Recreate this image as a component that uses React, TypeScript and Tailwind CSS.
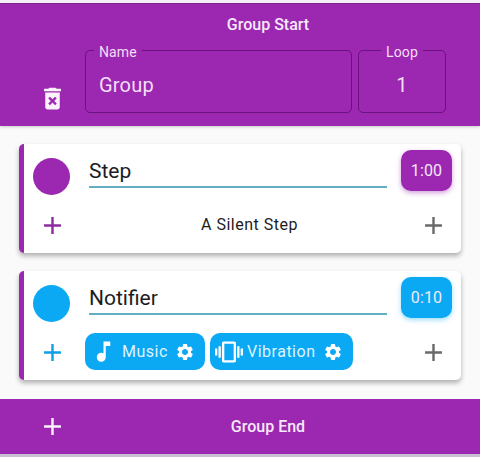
import { MdAdd, MdDeleteForever, MdMusicNote, MdSettings, MdVibration } from "react-icons/md";

const font = { fontFamily: "Roboto, sans-serif" };

function Field({ label, value, center, className }: { label: string; value: string; center?: boolean; className: string }) {
  return (
    <fieldset className={`h-[71px] rounded-[5px] border border-[#6a1280] ${center ? "text-center" : "px-[8px]"} ${className}`}>
      <legend className={`px-[5px] text-[14px] leading-[16px] tracking-[0.1px] text-[#f3dff7] ${center ? "mx-auto" : ""}`}>
        <span className="relative top-[2px]">{label}</span>
      </legend>
      <div className={`mt-[13px] text-[20px] leading-[28px] tracking-[0.2px] text-[#f3dff7] ${center ? "" : "pl-[5px]"}`}>{value}</div>
    </fieldset>
  );
}

function Card({
  color,
  title,
  time,
  children,
}: {
  color: string;
  title: string;
  time: string;
  children: React.ReactNode;
}) {
  const circle = color === "purple" ? "bg-[#9c27b0]" : "bg-[#0ba8f3]";
  const btn = color === "purple" ? "bg-[#9c27b0] shadow-[0_2px_5px_rgba(156,39,176,0.45)]" : "bg-[#0ba8f3] shadow-[0_2px_5px_rgba(11,168,243,0.4)]";
  const plus = color === "purple" ? "text-[#8e2ba1]" : "text-[#0f9fe6]";
  return (
    <div className="mx-[19px] flex h-[109px] w-[442px] flex-col rounded-[5px] border-l-[5px] border-[#9c27b0] bg-white shadow-[0_3px_5px_rgba(0,0,0,0.3)]">
      <div className="flex h-[61px] items-start pl-[9px] pr-[9px]">
        <div className={`mt-[14px] h-[37px] w-[37px] rounded-full ${circle}`} />
        <div className="ml-[19px] mt-[11px] h-[33px] w-[298px] border-b-2 border-[#62afc2] text-[21px] leading-[33px] text-[#1c1c1f]">{title}</div>
        <div className={`ml-[14px] mt-[6px] flex h-[41px] w-[51px] items-center justify-center rounded-[10px] text-[16px] tracking-[0.1px] text-[#f5e8f8] ${btn}`}>{time}</div>
      </div>
      <div className="flex h-[40px] items-center">
        <div className={`flex w-[56px] justify-center pl-[1px] ${plus}`}><MdAdd size={29} /></div>
        <div className="flex min-w-0 flex-1 items-center">{children}</div>
        <div className="flex w-[56px] justify-center text-[#6a6a6a]"><MdAdd size={29} /></div>
      </div>
    </div>
  );
}

function Chip({ icon, label, className }: { icon: React.ReactNode; label: string; className: string }) {
  return (
    <div className={`flex h-[37px] items-center rounded-[10px] bg-[#0ba8f3] text-[16px] tracking-[0.5px] text-[#dff4ff] ${className}`}>
      {icon}
      <span>{label}</span>
      <MdSettings size={20} className="ml-auto text-white" />
    </div>
  );
}

export default function App() {
  return (
    <div style={font} className="h-[457px] w-[480px] overflow-hidden bg-[#fafafa]">
      <div className="h-[4px] border-b border-[#7f2a90] bg-[#f6eef8]" />
      <header className="h-[122px] bg-[#9c27b0] shadow-[0_1px_3px_rgba(0,0,0,0.2)]">
        <div className="pl-[56px] pt-[11px] text-center text-[16px] font-medium leading-[20px] text-[#f6e9f9]">Group Start</div>
        <div className="mt-[7px] flex items-start">
          <div className="mt-[42px] flex w-[85px] justify-center pl-[19px] text-[#fbf3fc]">
            <MdDeleteForever size={29} />
          </div>
          <Field label="Name" value="Group" className="w-[267px]" />
          <Field label="Loop" value="1" center className="ml-[6px] w-[88px]" />
        </div>
      </header>

      <div className="pt-[18px]">
        <Card color="purple" title="Step" time="1:00">
          <div className="w-full pl-[14px] text-center text-[16px] tracking-[0.5px] text-[#1c1c1f]">A Silent Step</div>
        </Card>
      </div>

      <div className="pt-[18px]">
        <Card color="blue" title="Notifier" time="0:10">
          <div className="mb-[1px] flex gap-[5px] pl-[5px]">
            <Chip
              icon={<MdMusicNote size={27} className="mr-[5px] text-white" />}
              label="Music"
              className="w-[120px] pl-[5px] pr-[10px]"
            />
            <Chip
              icon={<MdVibration size={28} className="mr-[4px] text-white" />}
              label="Vibration"
              className="w-[143px] pl-[5px] pr-[10px]"
            />
          </div>
        </Card>
      </div>

      <footer className="mt-[19px] flex h-[55px] items-center bg-[#9c27b0] shadow-[0_3px_0_#c9bfd0]">
        <div className="flex w-[104px] justify-center text-[#fbf3fc]"><MdAdd size={29} /></div>
        <div className="w-[328px] text-center text-[16px] font-medium text-[#f6e9f9]">Group End</div>
      </footer>
    </div>
  );
}
